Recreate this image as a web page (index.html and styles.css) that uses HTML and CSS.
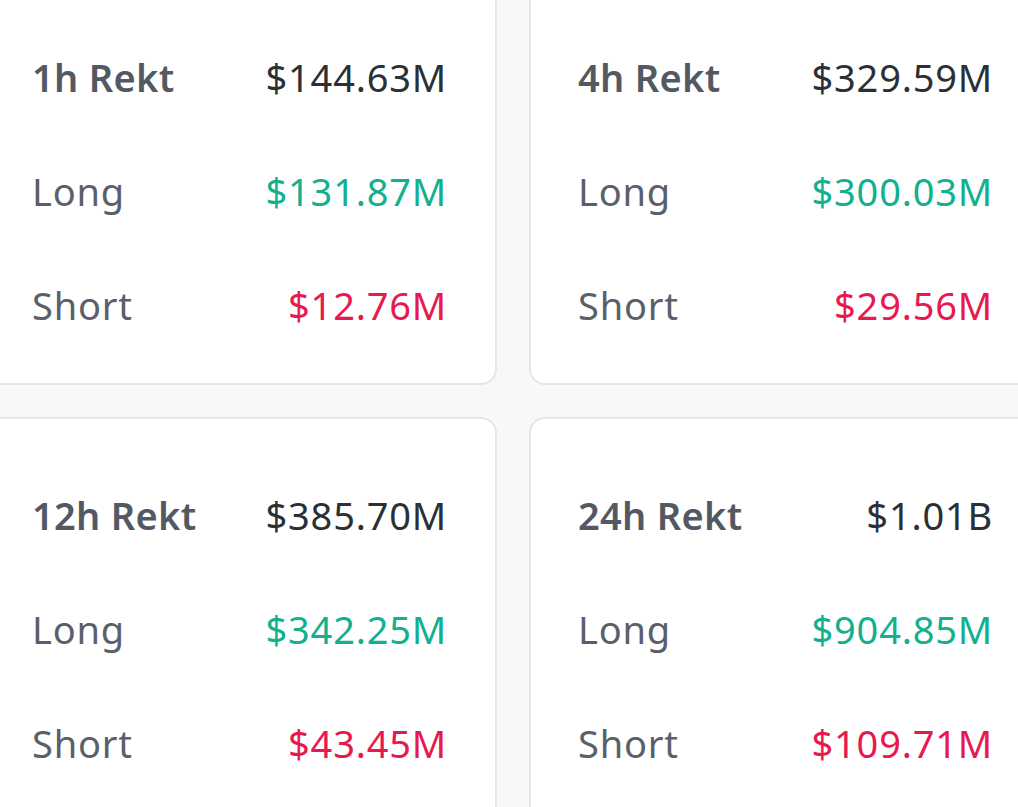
FILE: index.html
```html
<!DOCTYPE html>
<html>
<head>
<meta charset="utf-8">
<link rel="stylesheet" href="styles.css">
</head>
<body>
<div class="grid">
  <div class="card">
    <div class="row"><span class="title">1h Rekt</span><span class="val">$144.63M</span></div>
    <div class="row"><span class="label">Long</span><span class="val up">$131.87M</span></div>
    <div class="row"><span class="label">Short</span><span class="val down">$12.76M</span></div>
  </div>
  <div class="card">
    <div class="row"><span class="title">4h Rekt</span><span class="val">$329.59M</span></div>
    <div class="row"><span class="label">Long</span><span class="val up">$300.03M</span></div>
    <div class="row"><span class="label">Short</span><span class="val down">$29.56M</span></div>
  </div>
  <div class="card">
    <div class="row"><span class="title">12h Rekt</span><span class="val">$385.70M</span></div>
    <div class="row"><span class="label">Long</span><span class="val up">$342.25M</span></div>
    <div class="row"><span class="label">Short</span><span class="val down">$43.45M</span></div>
  </div>
  <div class="card">
    <div class="row"><span class="title">24h Rekt</span><span class="val">$1.01B</span></div>
    <div class="row"><span class="label">Long</span><span class="val up">$904.85M</span></div>
    <div class="row"><span class="label">Short</span><span class="val down">$109.71M</span></div>
  </div>
</div>
</body>
</html>
```

FILE: styles.css
```css
html, body {
  margin: 0;
  padding: 0;
  background: #f8f8f8;
  overflow: hidden;
  font-family: "Noto Sans", "Open Sans", sans-serif;
}
.grid {
  display: grid;
  grid-template-columns: 514px 514px;
  gap: 32px;
  margin: -21px 0 0 -17px;
  width: 1060px;
}
.card {
  background: #ffffff;
  border: 2px solid #e6e6e6;
  border-radius: 16px;
  padding: 39px 48px 23px 47px;
  height: 406px;
  box-sizing: border-box;
}
.row {
  display: flex;
  justify-content: space-between;
  align-items: baseline;
  height: 114px;
  line-height: 114px;
  font-size: 38px;
  letter-spacing: 0.8px;
}
.title {
  font-weight: 600;
  color: #535963;
  letter-spacing: 0.3px;
}
.label {
  color: #5a606b;
}
.val {
  color: #2b2f36;
}
.up { color: #12b08e; }
.down { color: #e8194e; }
```
